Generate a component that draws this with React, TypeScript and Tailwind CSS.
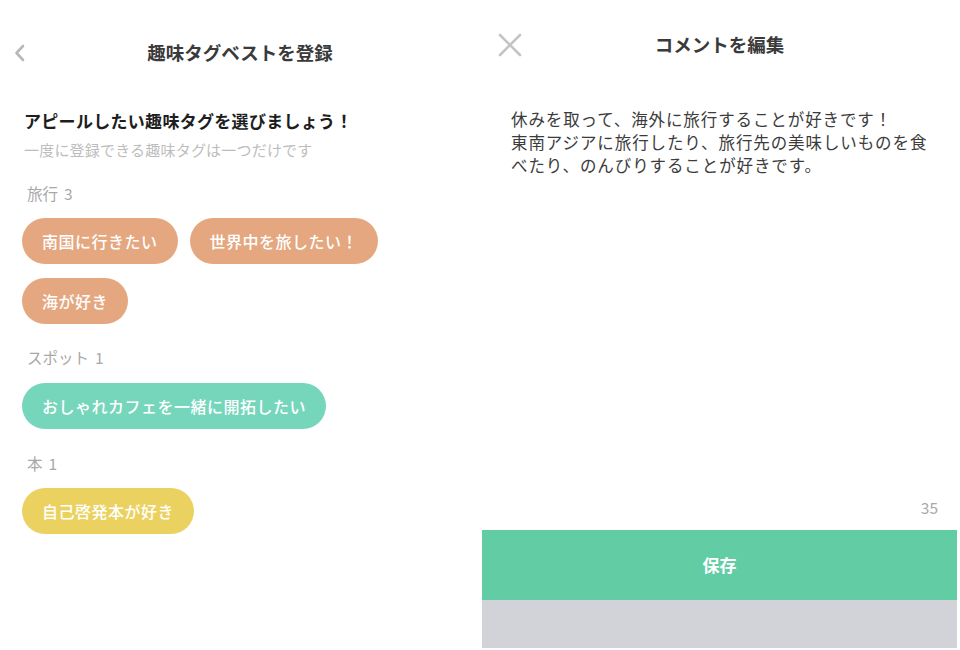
import React from "react";

const font = { fontFamily: '"Noto Sans CJK JP", "Noto Sans", sans-serif' };

function Pill({ label, color }: { label: string; color: string }) {
  return (
    <div className={`h-[46px] rounded-full px-[20px] flex items-center text-white text-[16px] tracking-[0.5px] font-medium ${color}`}>
      {label}
    </div>
  );
}

function Label({ name, count, mt }: { name: string; count: number; mt: string }) {
  return (
    <div className={`${mt} pl-[5px] flex gap-[6px] text-[15.5px] leading-[20px] text-[#a8a8a8]`}>
      <span>{name}</span>
      <span>{count}</span>
    </div>
  );
}

export default function App() {
  return (
    <div className="w-[960px] h-[650px] bg-white flex text-[#333]" style={font}>
      {/* Left panel */}
      <div className="w-[480px] flex flex-col">
        <div className="mt-[32px] h-[42px] grid grid-cols-[48px_1fr_48px] items-center">
          <div className="flex justify-start pl-[13px]">
            <svg width="14" height="20" viewBox="0 0 14 20" fill="none">
              <path d="M10 3 L3.5 10 L10 17" stroke="#b8b8b8" strokeWidth="2.6" strokeLinecap="round" strokeLinejoin="round" />
            </svg>
          </div>
          <div className="text-center text-[18.5px] font-bold text-[#3a3a3a]">趣味タグベストを登録</div>
          <div />
        </div>
        <div className="pl-[24px] mt-[35px]">
          <div className="text-[17px] leading-[24px] font-bold text-[#1e1e1e] tracking-[0.3px]">アピールしたい趣味タグを選びましょう！</div>
          <div className="mt-[7px] text-[15px] leading-[20px] text-[#bdbdbd] tracking-[0.2px]">一度に登録できる趣味タグは一つだけです</div>
        </div>
        <div className="pl-[22px]">
          <Label name="旅行" count={3} mt="mt-[23px]" />
          <div className="mt-[15px] flex flex-wrap gap-x-[12px] gap-y-[14px] w-[380px]">
            <Pill label="南国に行きたい" color="bg-[#e4a780]" />
            <Pill label="世界中を旅したい！" color="bg-[#e4a780]" />
            <Pill label="海が好き" color="bg-[#e4a780]" />
          </div>
          <Label name="スポット" count={1} mt="mt-[23px]" />
          <div className="mt-[16px] flex">
            <Pill label="おしゃれカフェを一緒に開拓したい" color="bg-[#75d6bc]" />
          </div>
          <Label name="本" count={1} mt="mt-[24px]" />
          <div className="mt-[15px] flex">
            <Pill label="自己啓発本が好き" color="bg-[#ebd260]" />
          </div>
        </div>
      </div>

      {/* Right panel */}
      <div className="w-[480px] flex flex-col pl-[2px] pr-[3px]">
        <div className="mt-[24px] h-[42px] grid grid-cols-[48px_1fr_48px] items-center">
          <div className="flex justify-start pl-[16px]">
            <svg width="24" height="24" viewBox="0 0 24 24" fill="none">
              <path d="M2 2 L22 22 M22 2 L2 22" stroke="#c4c4c4" strokeWidth="2.6" strokeLinecap="round" />
            </svg>
          </div>
          <div className="text-center text-[18.5px] font-bold text-[#3a3a3a]">コメントを編集</div>
          <div />
        </div>
        <div className="mt-[42px] pl-[29px] pr-[10px] text-[16.5px] leading-[23px] text-[#3c3c3c] tracking-[0.9px]">
          <div>休みを取って、海外に旅行することが好きです！</div>
          <div>東南アジアに旅行したり、旅行先の美味しいものを食</div>
          <div>べたり、のんびりすることが好きです。</div>
        </div>
        <div className="flex-1" />
        <div className="flex justify-end pr-[19px] text-[15.5px] leading-[20px] text-[#a8a8a8]">35</div>
        <div className="mt-[13px] h-[70px] bg-[#62cda5] flex items-center justify-center text-white text-[17px] font-bold">
          保存
        </div>
        <div className="h-[48px] bg-[#d1d3d8]" />
        <div className="h-[2px]" />
      </div>
    </div>
  );
}
